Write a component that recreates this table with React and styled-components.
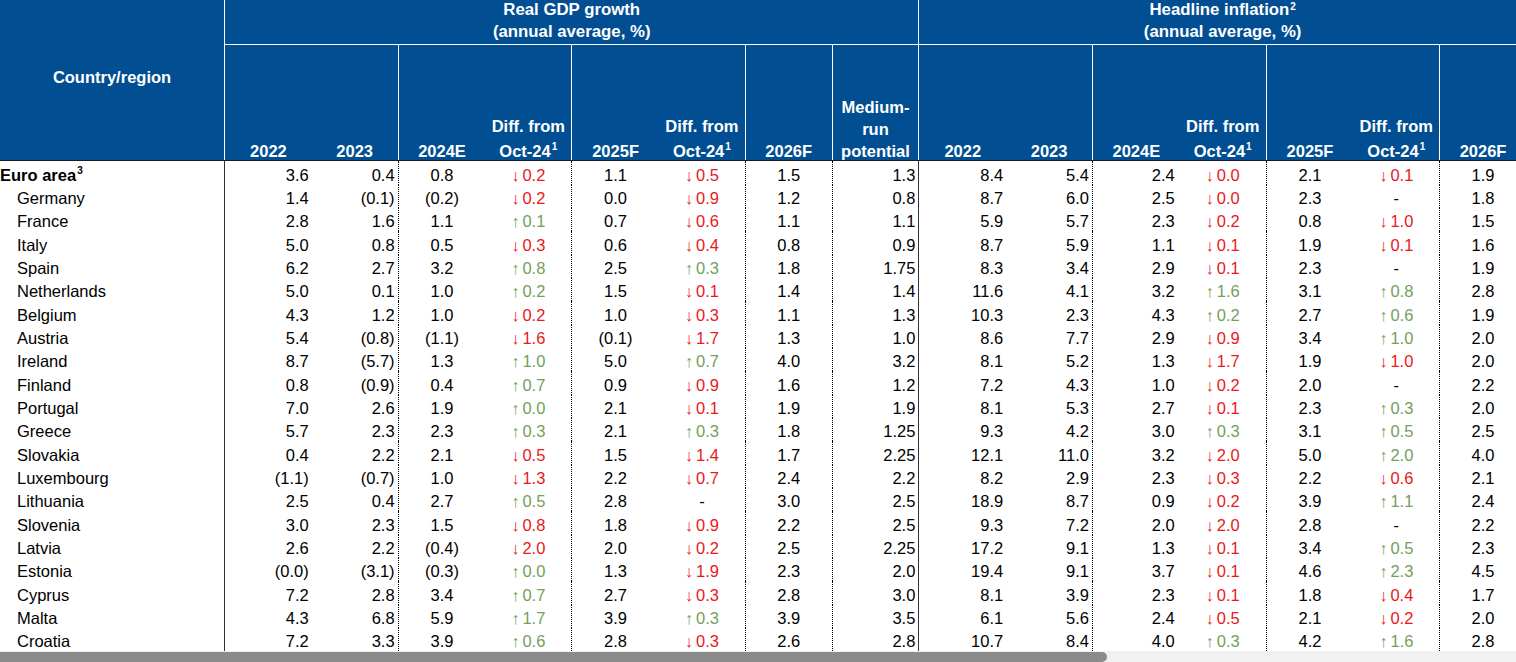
import React from "react";
import styled, { createGlobalStyle, css } from "styled-components";

const COL_W = 86.8;
const FIRST_W = 225;
const TEMPLATE = `${FIRST_W}px repeat(15, ${COL_W}px)`;
const TABLE_W = FIRST_W + 15 * COL_W;
const SHEET_W = 2076;

const BLUE = "#014e92";
const RED = "#ea1820";
const GREEN = "#74a05b";

const GlobalStyle = createGlobalStyle`
  html, body { margin: 0; padding: 0; background: #fff; overflow: hidden; }
  body { font-family: "Liberation Sans", Arial, sans-serif; color: #000; }
  * { box-sizing: border-box; }
`;

const Page = styled.div`
  width: 100vw;
  height: 662px;
  display: flex;
  flex-direction: column;
`;

const Viewport = styled.div`
  flex: 1;
  min-height: 0;
  overflow: hidden;
`;

const Sheet = styled.div`
  width: ${SHEET_W}px;
`;

const ScrollTrack = styled.div`
  height: 11px;
  flex: none;
  background: #f1f1f1;
  padding-top: 1px;
`;

const ScrollThumb = styled.div`
  height: 10px;
  background: #8b8b8b;
  border-radius: 0 5px 5px 0;
`;

const Header = styled.div`
  display: grid;
  grid-template-columns: ${TEMPLATE};
  grid-template-rows: 45px 115px;
  width: ${TABLE_W}px;
  height: 161px;
  background: ${BLUE};
  color: #fff;
  font-weight: bold;
  font-size: 16.5px;
  border-bottom: 1px solid #1c1c1c;
`;

const CountryHead = styled.div`
  grid-row: 1 / 3;
  grid-column: 1;
  display: flex;
  align-items: center;
  justify-content: center;
  line-height: 18px;
  padding-bottom: 6px;
  border-right: 1px solid #fff;
`;

const GroupHead = styled.div`
  grid-row: 1;
  grid-column: span ${(p) => p.$span};
  display: flex;
  flex-direction: column;
  align-items: center;
  gap: 4.5px;
  padding-top: 0.5px;
  font-size: 16.8px;
  border-bottom: 1px solid #fff;
  border-right: ${(p) => (p.$divider ? "1px solid #fff" : "none")};
`;

const HeadLine = styled.div`
  line-height: 18px;
  white-space: nowrap;
  text-align: center;
`;

const SubHead = styled.div`
  grid-row: 2;
  display: flex;
  flex-direction: column;
  justify-content: flex-end;
  align-items: center;
  gap: ${(p) => p.$gap || 0}px;
  border-right: ${(p) => (p.$divider ? "1px solid #fff" : "none")};
`;

const Sup = styled.sup`
  font-size: 10px;
  line-height: 0;
  vertical-align: ${(p) => p.$raise ?? 7}px;
  margin-left: 1px;
`;

const Body = styled.div`
  width: ${TABLE_W}px;
`;

const Row = styled.div`
  display: grid;
  grid-template-columns: ${TEMPLATE};
  height: 23.35px;
  font-size: 16.5px;
`;

const NameCell = styled.div`
  border-right: 1px solid #333;
  line-height: 20px;
  padding-top: 3.5px;
  padding-left: ${(p) => (p.$total ? 0 : 17)}px;
  font-weight: ${(p) => (p.$total ? "bold" : "normal")};
  white-space: nowrap;
`;

const lineStyles = {
  dotted: css`border-right: 1px dotted #000;`,
  solid: css`border-right: 1px solid #333;`,
};

const Cell = styled.div`
  line-height: 20px;
  padding-top: 3.5px;
  white-space: nowrap;
  text-align: ${(p) => p.$align};
  padding-right: ${(p) => (p.$align === "right" ? p.$pad ?? 3 : 0)}px;
  ${(p) => (p.$line ? lineStyles[p.$line] : "")}
`;

const Change = styled.span`
  color: ${(p) => (p.$up ? GREEN : RED)};
`;

const Arrow = styled.span`
  margin-right: 3px;
`;

const columns = [
  { align: "right", head: ["2022"] },
  { align: "right", line: "dotted", head: ["2023"], headDivider: true },
  { align: "center", head: ["2024E"] },
  { align: "center", line: "dotted", diff: true, headDivider: true },
  { align: "center", head: ["2025F"] },
  { align: "center", line: "dotted", diff: true, headDivider: true },
  { align: "center", line: "dotted", head: ["2026F"], headDivider: true },
  { align: "right", line: "solid", head: ["Medium-", "run", "potential"], headDivider: true, gap: 4 },
  { align: "right", head: ["2022"] },
  { align: "right", line: "dotted", head: ["2023"], headDivider: true },
  { align: "right", pad: 5, head: ["2024E"] },
  { align: "center", line: "dotted", diff: true, headDivider: true },
  { align: "center", head: ["2025F"] },
  { align: "center", line: "dotted", diff: true, headDivider: true },
  { align: "center", line: "dotted", head: ["2026F"], headDivider: true },
];

const rows = [
  ["Euro area", "3.6", "0.4", "0.8", "d0.2", "1.1", "d0.5", "1.5", "1.3", "8.4", "5.4", "2.4", "d0.0", "2.1", "d0.1", "1.9"],
  ["Germany", "1.4", "(0.1)", "(0.2)", "d0.2", "0.0", "d0.9", "1.2", "0.8", "8.7", "6.0", "2.5", "d0.0", "2.3", "-", "1.8"],
  ["France", "2.8", "1.6", "1.1", "u0.1", "0.7", "d0.6", "1.1", "1.1", "5.9", "5.7", "2.3", "d0.2", "0.8", "d1.0", "1.5"],
  ["Italy", "5.0", "0.8", "0.5", "d0.3", "0.6", "d0.4", "0.8", "0.9", "8.7", "5.9", "1.1", "d0.1", "1.9", "d0.1", "1.6"],
  ["Spain", "6.2", "2.7", "3.2", "u0.8", "2.5", "u0.3", "1.8", "1.75", "8.3", "3.4", "2.9", "d0.1", "2.3", "-", "1.9"],
  ["Netherlands", "5.0", "0.1", "1.0", "u0.2", "1.5", "d0.1", "1.4", "1.4", "11.6", "4.1", "3.2", "u1.6", "3.1", "u0.8", "2.8"],
  ["Belgium", "4.3", "1.2", "1.0", "d0.2", "1.0", "d0.3", "1.1", "1.3", "10.3", "2.3", "4.3", "u0.2", "2.7", "u0.6", "1.9"],
  ["Austria", "5.4", "(0.8)", "(1.1)", "d1.6", "(0.1)", "d1.7", "1.3", "1.0", "8.6", "7.7", "2.9", "d0.9", "3.4", "u1.0", "2.0"],
  ["Ireland", "8.7", "(5.7)", "1.3", "u1.0", "5.0", "u0.7", "4.0", "3.2", "8.1", "5.2", "1.3", "d1.7", "1.9", "d1.0", "2.0"],
  ["Finland", "0.8", "(0.9)", "0.4", "u0.7", "0.9", "d0.9", "1.6", "1.2", "7.2", "4.3", "1.0", "d0.2", "2.0", "-", "2.2"],
  ["Portugal", "7.0", "2.6", "1.9", "u0.0", "2.1", "d0.1", "1.9", "1.9", "8.1", "5.3", "2.7", "d0.1", "2.3", "u0.3", "2.0"],
  ["Greece", "5.7", "2.3", "2.3", "u0.3", "2.1", "u0.3", "1.8", "1.25", "9.3", "4.2", "3.0", "u0.3", "3.1", "u0.5", "2.5"],
  ["Slovakia", "0.4", "2.2", "2.1", "d0.5", "1.5", "d1.4", "1.7", "2.25", "12.1", "11.0", "3.2", "d2.0", "5.0", "u2.0", "4.0"],
  ["Luxembourg", "(1.1)", "(0.7)", "1.0", "d1.3", "2.2", "d0.7", "2.4", "2.2", "8.2", "2.9", "2.3", "d0.3", "2.2", "d0.6", "2.1"],
  ["Lithuania", "2.5", "0.4", "2.7", "u0.5", "2.8", "-", "3.0", "2.5", "18.9", "8.7", "0.9", "d0.2", "3.9", "u1.1", "2.4"],
  ["Slovenia", "3.0", "2.3", "1.5", "d0.8", "1.8", "d0.9", "2.2", "2.5", "9.3", "7.2", "2.0", "d2.0", "2.8", "-", "2.2"],
  ["Latvia", "2.6", "2.2", "(0.4)", "d2.0", "2.0", "d0.2", "2.5", "2.25", "17.2", "9.1", "1.3", "d0.1", "3.4", "u0.5", "2.3"],
  ["Estonia", "(0.0)", "(3.1)", "(0.3)", "u0.0", "1.3", "d1.9", "2.3", "2.0", "19.4", "9.1", "3.7", "d0.1", "4.6", "u2.3", "4.5"],
  ["Cyprus", "7.2", "2.8", "3.4", "u0.7", "2.7", "d0.3", "2.8", "3.0", "8.1", "3.9", "2.3", "d0.1", "1.8", "d0.4", "1.7"],
  ["Malta", "4.3", "6.8", "5.9", "u1.7", "3.9", "u0.3", "3.9", "3.5", "6.1", "5.6", "2.4", "d0.5", "2.1", "d0.2", "2.0"],
  ["Croatia", "7.2", "3.3", "3.9", "u0.6", "2.8", "d0.3", "2.6", "2.8", "10.7", "8.4", "4.0", "u0.3", "4.2", "u1.6", "2.8"],
];

function DiffValue({ value }) {
  if (value === "-") return "-";
  const up = value[0] === "u";
  return (
    <Change $up={up}>
      <Arrow>{up ? "↑" : "↓"}</Arrow>
      {value.slice(1)}
    </Change>
  );
}

function DiffHead() {
  return (
    <>
      <HeadLine>Diff. from</HeadLine>
      <HeadLine>
        Oct-24<Sup>1</Sup>
      </HeadLine>
    </>
  );
}

function GroupTitle({ title, sup }) {
  return (
    <>
      <HeadLine>
        {title}
        {sup && <Sup $raise={5}>{sup}</Sup>}
      </HeadLine>
      <HeadLine>(annual average, %)</HeadLine>
    </>
  );
}

export default function App() {
  const viewportW = 1516;
  const thumbW = (viewportW * viewportW) / SHEET_W;
  return (
    <>
      <GlobalStyle />
      <Page>
        <Viewport>
          <Sheet>
            <Header>
              <CountryHead>Country/region</CountryHead>
              <GroupHead $span={8} $divider>
                <GroupTitle title="Real GDP growth" />
              </GroupHead>
              <GroupHead $span={7} $divider>
                <GroupTitle title="Headline inflation" sup="2" />
              </GroupHead>
              {columns.map((c, i) => (
                <SubHead key={i} $divider={c.headDivider} $gap={c.diff ? 7 : c.gap}>
                  {c.diff ? (
                    <DiffHead />
                  ) : (
                    c.head.map((t) => <HeadLine key={t}>{t}</HeadLine>)
                  )}
                </SubHead>
              ))}
            </Header>
            <Body>
              {rows.map(([name, ...vals], r) => (
                <Row key={name}>
                  <NameCell $total={r === 0}>
                    {name}
                    {r === 0 && <Sup>3</Sup>}
                  </NameCell>
                  {vals.map((v, i) => {
                    const c = columns[i];
                    return (
                      <Cell key={i} $align={c.align} $line={c.line} $pad={c.pad}>
                        {c.diff ? <DiffValue value={v} /> : v}
                      </Cell>
                    );
                  })}
                </Row>
              ))}
            </Body>
          </Sheet>
        </Viewport>
        <ScrollTrack>
          <ScrollThumb style={{ width: `${thumbW}px` }} />
        </ScrollTrack>
      </Page>
    </>
  );
}
